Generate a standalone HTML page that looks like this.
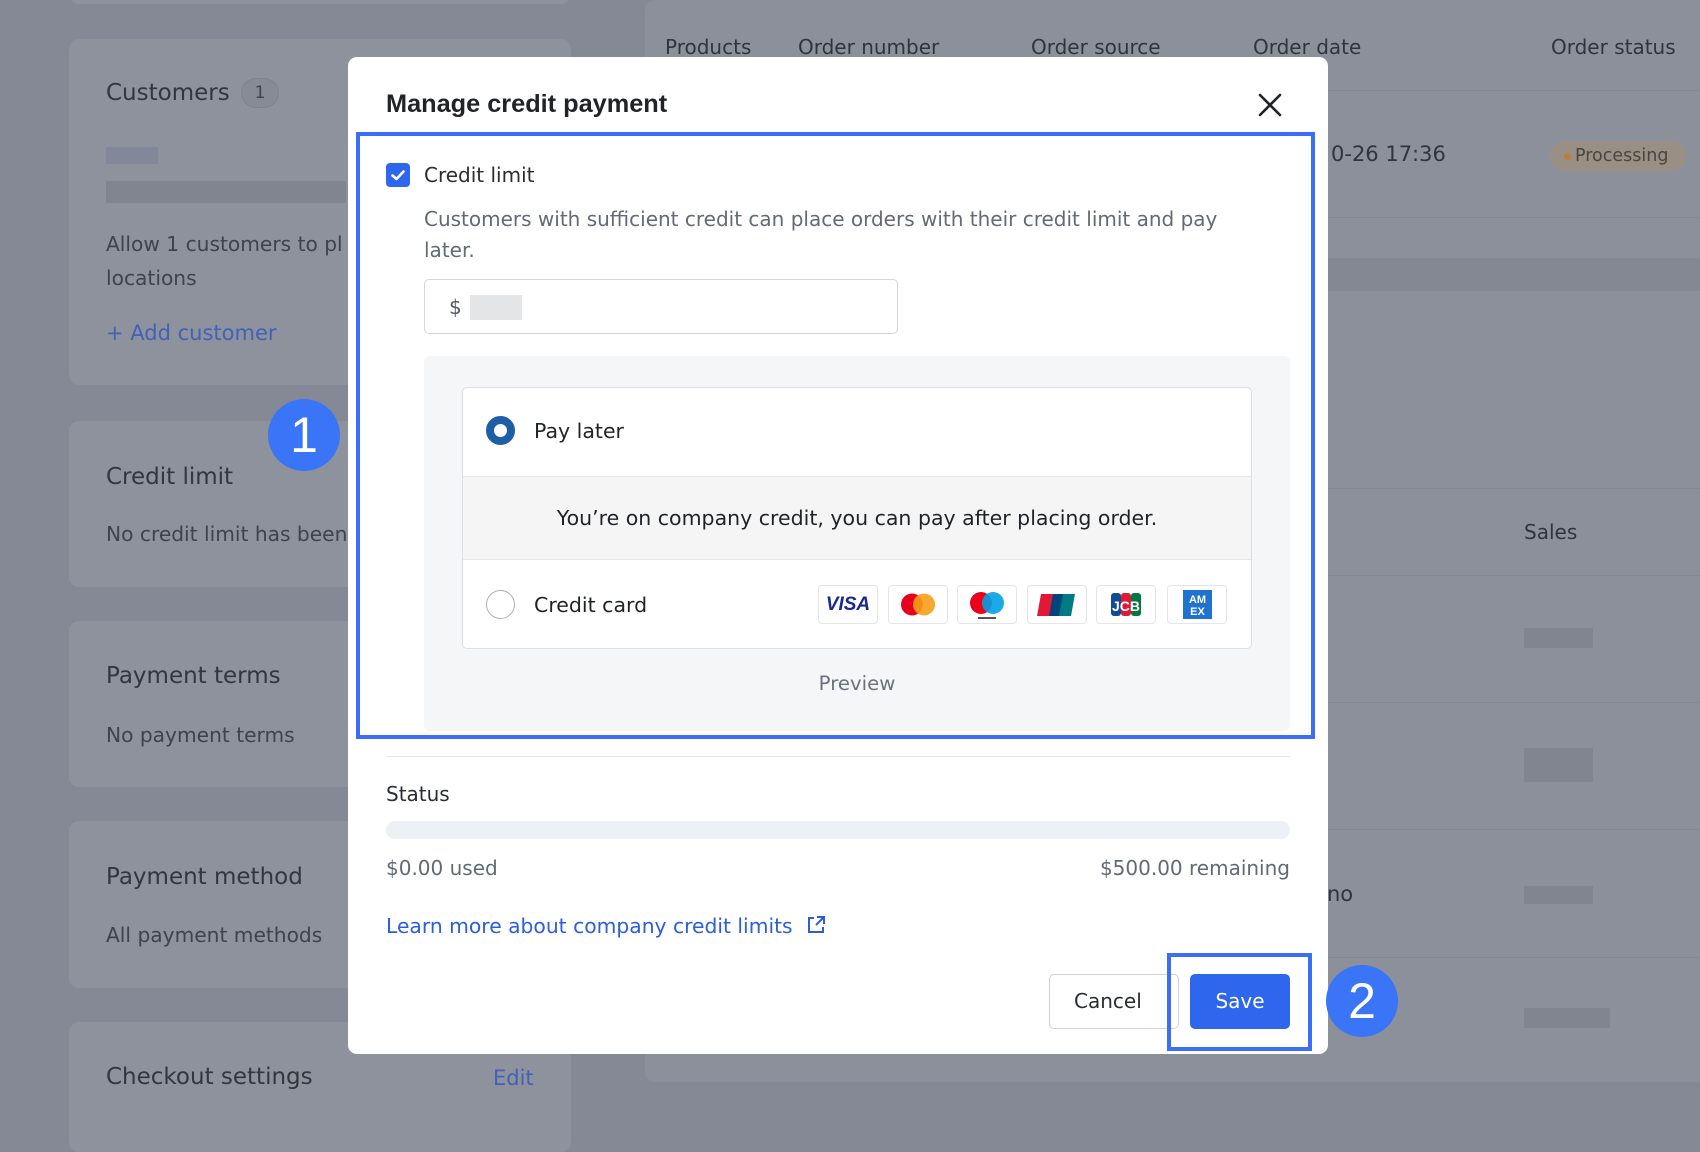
<!DOCTYPE html>
<html><head><meta charset="utf-8"><style>
*{margin:0;padding:0;box-sizing:border-box}
body{width:1700px;height:1118px;overflow:hidden;background:#848995;font-family:"DejaVu Sans","Liberation Sans",sans-serif;position:relative}
.a{position:absolute;white-space:nowrap}
.card{position:absolute;left:69px;width:502px;background:#8d929c;border-radius:10px}
.bt{color:#32363e;font-size:23px;line-height:30px}
.bs{color:#3f434b;font-size:20.2px;line-height:30px}
.th{color:#30343c;font-size:20px;line-height:26px}
.m{color:#1f2328}
.blur{position:absolute;background:#7d828d;opacity:.8}
.ic{position:absolute;top:585px;width:60px;height:39px;border:1px solid #e3e5e9;border-radius:4px;background:#fff;overflow:hidden}
</style></head><body>
<div class="card" style="top:-20px;height:24px"></div>
<div class="card" style="top:39px;height:346px"></div>
<div class="a bt" style="left:106px;top:78px">Customers</div>
<div class="a" style="left:241px;top:78px;width:38px;height:30px;border-radius:15px;background:#868b95;border:1px solid #7e838d;color:#3f434b;font-size:17px;line-height:28px;text-align:center">1</div>
<div class="blur" style="left:106px;top:147px;width:52px;height:17px;background:#7f8699"></div>
<div class="blur" style="left:106px;top:181px;width:240px;height:22px"></div>
<div class="a bs" style="left:106px;top:229px">Allow 1 customers to pl</div>
<div class="a bs" style="left:106px;top:263px">locations</div>
<div class="a" style="left:106px;top:318px;font-size:21px;line-height:30px;color:#4261b8">+ Add customer</div>
<div class="card" style="top:421px;height:166px"></div>
<div class="a bt" style="left:106px;top:462px">Credit limit</div>
<div class="a bs" style="left:106px;top:519px">No credit limit has been</div>
<div class="card" style="top:621px;height:166px"></div>
<div class="a bt" style="left:106px;top:661px">Payment terms</div>
<div class="a bs" style="left:106px;top:720px">No payment terms</div>
<div class="card" style="top:821px;height:167px"></div>
<div class="a bt" style="left:106px;top:862px">Payment method</div>
<div class="a bs" style="left:106px;top:920px">All payment methods</div>
<div class="card" style="top:1022px;height:130px"></div>
<div class="a bt" style="left:106px;top:1062px">Checkout settings</div>
<div class="a" style="left:493px;top:1063px;font-size:21px;line-height:30px;color:#4261b8">Edit</div>
<div class="a" style="left:645px;top:0;width:1100px;height:1082px;background:#8b909a;border-radius:10px"></div>
<div class="a th" style="left:665px;top:34px">Products</div>
<div class="a th" style="left:798px;top:34px">Order number</div>
<div class="a th" style="left:1031px;top:34px">Order source</div>
<div class="a th" style="left:1253px;top:34px">Order date</div>
<div class="a th" style="left:1551px;top:34px">Order status</div>
<div class="a" style="left:645px;top:90px;width:1060px;height:1px;background:#838893"></div>
<div class="a th" style="left:1331px;top:141px;font-size:21px">0-26 17:36</div>
<div class="a" style="left:1550px;top:141px;width:136px;height:30px;border-radius:15px;background:#9a8f84;color:#4a4540;font-size:17.5px;line-height:30px;padding-left:25px">Processing</div>
<div class="a" style="left:1564px;top:153px;width:7px;height:7px;border-radius:50%;background:#b77f45"></div>
<div class="a" style="left:645px;top:217px;width:1060px;height:1px;background:#838893"></div>
<div class="a" style="left:645px;top:258px;width:1060px;height:33px;background:#838893"></div>
<div class="a" style="left:645px;top:488px;width:1060px;height:1px;background:#838893"></div>
<div class="a th" style="left:1524px;top:519px">Sales</div>
<div class="a" style="left:645px;top:575px;width:1060px;height:1px;background:#838893"></div>
<div class="blur" style="left:1524px;top:628px;width:69px;height:20px"></div>
<div class="a" style="left:645px;top:702px;width:1060px;height:1px;background:#838893"></div>
<div class="blur" style="left:1524px;top:748px;width:69px;height:34px"></div>
<div class="a" style="left:645px;top:829px;width:1060px;height:1px;background:#838893"></div>
<div class="a th" style="left:1327px;top:881px;font-size:21px">no</div>
<div class="blur" style="left:1524px;top:886px;width:69px;height:18px"></div>
<div class="a" style="left:645px;top:957px;width:1060px;height:1px;background:#838893"></div>
<div class="blur" style="left:1524px;top:1008px;width:86px;height:20px"></div>
<!-- modal -->
<div class="a" style="left:348px;top:57px;width:980px;height:997px;background:#fff;border-radius:9px"></div>
<div class="a m" style="left:386px;top:89px;font-family:'Liberation Sans',sans-serif;font-size:25.3px;line-height:30px;font-weight:bold;color:#202328">Manage credit payment</div>
<svg class="a" style="left:1258px;top:93px" width="24" height="24" viewBox="0 0 24 24"><path d="M2 2L22 22M22 2L2 22" stroke="#202328" stroke-width="2.6" stroke-linecap="round"/></svg>
<div class="a" style="left:424px;top:356px;width:866px;height:375px;background:#f5f6f8;border-radius:6px"></div>
<div class="a" style="left:386px;top:163px;width:24px;height:24px;background:#2f66f0;border-radius:4px"></div>
<svg class="a" style="left:386px;top:163px" width="24" height="24" viewBox="0 0 24 24"><path d="M6.5 12.5L10.5 16L17.5 8.5" stroke="#fff" stroke-width="2.6" fill="none" stroke-linecap="round" stroke-linejoin="round"/></svg>
<div class="a m" style="left:424px;top:160px;font-size:20px;line-height:30px;color:#2a2d33">Credit limit</div>
<div class="a" style="left:424px;top:204px;font-size:20px;line-height:30px;color:#636a75">Customers with sufficient credit can place orders with their credit limit and pay</div>
<div class="a" style="left:424px;top:235px;font-size:20px;line-height:30px;color:#636a75">later.</div>
<div class="a" style="left:424px;top:279px;width:474px;height:55px;border:1px solid #d3d6db;border-radius:5px;background:#fff"></div>
<div class="a" style="left:449px;top:293px;font-size:20px;line-height:28px;color:#555b66">$</div>
<div class="a" style="left:470px;top:295px;width:52px;height:25px;background:#e4e5e7"></div>
<div class="a" style="left:462px;top:387px;width:790px;height:262px;border:1px solid #dcdfe3;border-radius:5px;background:#fff;overflow:hidden">
 <div style="position:absolute;left:0;top:88px;width:790px;height:84px;background:#f5f5f5;border-top:1px solid #e3e5e8;border-bottom:1px solid #e3e5e8"></div>
</div>
<div class="a" style="left:486px;top:416px;width:29px;height:29px;border-radius:50%;border:8px solid #1c5fa6;background:#fff"></div>
<div class="a m" style="left:534px;top:416px;font-size:20.5px;line-height:30px;color:#1f2328">Pay later</div>
<div class="a m" style="left:462px;top:503px;width:790px;text-align:center;font-size:20.5px;line-height:30px;color:#1f2328">You’re on company credit, you can pay after placing order.</div>
<div class="a" style="left:486px;top:590px;width:29px;height:29px;border-radius:50%;border:1.5px solid #aeb2b8;background:#fff"></div>
<div class="a m" style="left:534px;top:590px;font-size:20.5px;line-height:30px;color:#1f2328">Credit card</div>
<div class="ic" style="left:818px"><div style="text-align:center;font:italic bold 19px/37px 'Liberation Sans',sans-serif;color:#1a2a8c">VISA</div></div>
<div class="ic" style="left:888px"><svg width="58" height="37"><circle cx="23" cy="18.5" r="11" fill="#eb001b"/><circle cx="35" cy="18.5" r="11" fill="#f79e1b" opacity=".9"/></svg></div>
<div class="ic" style="left:957px"><svg width="58" height="37"><circle cx="23" cy="17" r="11" fill="#eb001b"/><circle cx="35" cy="17" r="11" fill="#00a2e5" opacity=".9"/><rect x="20" y="31" width="18" height="2" fill="#555"/></svg></div>
<div class="ic" style="left:1027px"><svg width="58" height="37"><path d="M13 8h14l-4 22H9z" fill="#e21836"/><path d="M25 8h12l-4 22H21z" fill="#00447c"/><path d="M35 8h12l-4 22H31z" fill="#007b84"/></svg></div>
<div class="ic" style="left:1096px"><svg width="58" height="37"><rect x="14" y="7" width="10" height="23" rx="3" fill="#0e4c96"/><rect x="24" y="7" width="10" height="23" rx="3" fill="#e21836"/><rect x="34" y="7" width="10" height="23" rx="3" fill="#007940"/><text x="29" y="25" font-size="14" font-weight="bold" fill="#fff" text-anchor="middle" font-family="Liberation Sans">JCB</text></svg></div>
<div class="ic" style="left:1167px"><svg width="58" height="37"><rect x="15" y="4" width="29" height="29" fill="#1f72cd"/><text x="29.5" y="17" font-size="11" font-weight="bold" fill="#fff" text-anchor="middle" font-family="Liberation Sans">AM</text><text x="29.5" y="29" font-size="11" font-weight="bold" fill="#fff" text-anchor="middle" font-family="Liberation Sans">EX</text></svg></div>
<div class="a" style="left:424px;top:669px;width:866px;text-align:center;font-size:19.7px;line-height:30px;color:#6b717c">Preview</div>
<div class="a" style="left:356px;top:132px;width:959px;height:607px;border:4px solid #3b6ef6"></div>
<div class="a" style="left:386px;top:756px;width:904px;height:1px;background:#e6e8eb"></div>
<div class="a m" style="left:386px;top:779px;font-size:20px;line-height:30px;color:#2a2d33">Status</div>
<div class="a" style="left:386px;top:821px;width:904px;height:18px;border-radius:9px;background:#edf0f5"></div>
<div class="a" style="left:386px;top:853px;font-size:20px;line-height:30px;color:#636a75">$0.00 used</div>
<div class="a" style="left:1000px;top:853px;width:290px;text-align:right;font-size:20px;line-height:30px;color:#636a75">$500.00 remaining</div>
<div class="a" style="left:386px;top:911px;font-size:20.3px;line-height:30px;color:#2b5fd9">Learn more about company credit limits</div>
<svg class="a" style="left:805px;top:914px" width="22" height="22" viewBox="0 0 22 22"><path d="M9 4H4v14h14v-5M12 3h7v7M19 3l-8 8" stroke="#2b5fd9" stroke-width="2" fill="none"/></svg>
<div class="a" style="left:1049px;top:974px;width:130px;height:55px;border:1px solid #cfd2d7;border-radius:5px;background:#fff;font-size:20px;line-height:53px;color:#2a2d33;padding-left:24px">Cancel</div>
<div class="a" style="left:1190px;top:974px;width:100px;height:55px;border-radius:5px;background:#2f66ee;font-size:20px;line-height:55px;color:#fff;text-align:center">Save</div>
<div class="a" style="left:1167px;top:953px;width:145px;height:98px;border:4px solid #3b6ef6"></div>
<div class="a" style="left:268px;top:399px;width:72px;height:72px;border-radius:50%;background:#3a74f7;color:#fff;font-family:'Liberation Sans',sans-serif;font-size:50px;line-height:72px;text-align:center">1</div>
<div class="a" style="left:1326px;top:965px;width:72px;height:72px;border-radius:50%;background:#3a74f7;color:#fff;font-family:'Liberation Sans',sans-serif;font-size:50px;line-height:72px;text-align:center">2</div>
</body></html>
